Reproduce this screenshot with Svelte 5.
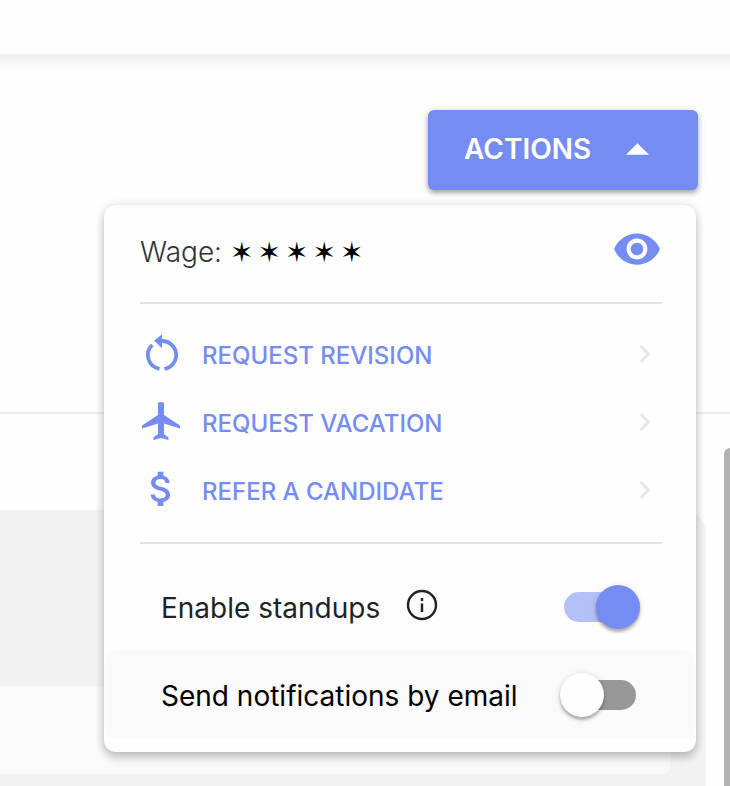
<script>
  let open = true;
  let wageVisible = false;
  let standups = true;
  let notifications = false;

  const wage = "2400";
  const hidden = "✶✶✶✶✶";
  const items = [
    { icon: "revision", label: "Request revision" },
    { icon: "vacation", label: "Request vacation" },
    { icon: "refer", label: "Refer a candidate" },
  ];
</script>

<div class="page">
  <header class="topbar"></header>

  <section class="toolbar">
    <div class="actions">
      <button
        class="actions-btn"
        aria-expanded={open}
        on:click={() => (open = !open)}
      >
        Actions
        <svg class="caret" class:closed={!open} viewBox="0 0 24 12">
          <path d="M0 12 12 0l12 12z" />
        </svg>
      </button>

      {#if open}
        <div class="menu">
          <div class="wage">
            <span class="wage-label">Wage:</span>
            <span class="wage-value">
              {#each wageVisible ? wage : hidden as char}
                <span>{char}</span>
              {/each}
            </span>
            <button
              class="eye"
              aria-label="Show wage"
              on:click={() => (wageVisible = !wageVisible)}
            >
              <svg viewBox="0 0 24 24">
                <path
                  d="M12 4.5C7 4.5 2.73 7.61 1 12c1.73 4.39 6 7.5 11 7.5s9.27-3.11 11-7.5c-1.73-4.39-6-7.5-11-7.5zM12 17c-2.76 0-5-2.24-5-5s2.24-5 5-5 5 2.24 5 5-2.24 5-5 5zm0-8c-1.66 0-3 1.34-3 3s1.34 3 3 3 3-1.34 3-3-1.34-3-3-3z"
                />
              </svg>
            </button>
          </div>

          <div class="list">
            {#each items as item}
              <button class="item">
                <svg class="item-icon" viewBox="0 0 48 48">
                  {#if item.icon === "revision"}
                    <g class="stroke">
                      <path d="M25 11a14 14 0 0 1 2.5 27.8" />
                      <path d="M22.5 38.8A14 14 0 0 1 15.3 14.8" />
                    </g>
                    <path d="M25 4.3v13.9l-7.8-7.4z" />
                  {:else if item.icon === "vacation"}
                    <path
                      d="M21 5.5q0-1.2 1.2-1.2h3.6q1.2 0 1.2 1.2V17l16 10.5v3l-16-5V36l4.5 3.5V42L24 40l-7.5 2v-2.5L21 36V25.5l-16 5v-3L21 17z"
                    />
                  {:else}
                    <path
                      transform="translate(1.7 0) scale(1.9)"
                      d="M11.8 10.9c-2.27-.59-3-1.2-3-2.15 0-1.09 1.01-1.85 2.7-1.85 1.78 0 2.44.85 2.5 2.1h2.21c-.07-1.72-1.12-3.3-3.21-3.81V3h-3v2.16c-1.94.42-3.5 1.68-3.5 3.61 0 2.31 1.91 3.46 4.7 4.13 2.5.6 3 1.48 3 2.41 0 .69-.49 1.79-2.7 1.79-2.06 0-2.87-.92-2.98-2.1h-2.2c.12 2.19 1.76 3.42 3.68 3.83V21h3v-2.15c1.95-.37 3.5-1.5 3.5-3.55 0-2.84-2.43-3.81-4.7-4.4z"
                    />
                  {/if}
                </svg>
                <span class="item-label">{item.label}</span>
                <svg class="chevron" viewBox="0 0 12 20">
                  <path d="m1.5 2 8 8-8 8" />
                </svg>
              </button>
            {/each}
          </div>

          <div class="setting">
            <label for="standups">Enable standups</label>
            <svg class="info" viewBox="0 0 32 32">
              <circle cx="16" cy="16" r="14" />
              <path d="M16 14.5V23M16 9v3" />
            </svg>
            <input id="standups" type="checkbox" bind:checked={standups} />
          </div>
          <div class="setting shaded">
            <label for="notifications">Send notifications by email</label>
            <input
              id="notifications"
              type="checkbox"
              bind:checked={notifications}
            />
          </div>
        </div>
      {/if}
    </div>
  </section>

  <main class="content">
    <div class="panel">
      <div class="panel-row"></div>
    </div>
    <div class="scrollbar"></div>
  </main>
</div>

<style>
  :global(body) {
    background: #fefefe;
    font-family: Inter, "DejaVu Sans", sans-serif;
  }

  .page {
    display: flex;
    flex-direction: column;
    min-height: 100vh;
    overflow: hidden;
  }

  .topbar {
    height: 54px;
    margin: 0 -16px;
    box-shadow: 0 4px 16px rgba(0, 0, 0, 0.09);
  }

  button {
    padding: 0;
    border: none;
    background: none;
    font-family: inherit;
    cursor: pointer;
  }

  svg {
    display: block;
    flex-shrink: 0;
  }

  .toolbar {
    display: flex;
    justify-content: flex-end;
    padding: 56px 32px 222px;
    border-bottom: 2px solid #ececec;
  }

  .actions {
    position: relative;
  }

  .actions-btn {
    display: flex;
    align-items: center;
    justify-content: space-between;
    width: 270px;
    height: 80px;
    padding: 0 49px 2px 36px;
    border-radius: 6px;
    background: #758cf2;
    box-shadow:
      0 3px 5px rgba(0, 0, 0, 0.3),
      0 1px 10px rgba(0, 0, 0, 0.1);
    color: #fff;
    font-size: 28px;
    font-weight: 600;
    text-transform: uppercase;
  }

  .caret {
    width: 23px;
    height: 12px;
    fill: #fff;
  }

  .caret.closed {
    transform: rotate(180deg);
  }

  .menu {
    position: absolute;
    top: 95px;
    right: 2px;
    z-index: 1;
    box-sizing: border-box;
    width: 592px;
    padding: 0 2px 14px;
    border-radius: 12px;
    background: #fefefe;
    box-shadow:
      0 6px 10px rgba(0, 0, 0, 0.2),
      0 0 10px rgba(0, 0, 0, 0.12);
  }

  .wage {
    display: flex;
    align-items: center;
    height: 88px;
    margin: 0 32px 0 34px;
    padding-bottom: 9px;
    border-bottom: 2px solid #e4e4e4;
    font-size: 28px;
  }

  .wage-label {
    padding-top: 6px;
    margin-right: 8px;
    color: #333;
    font-weight: 300;
  }

  .wage-value {
    display: flex;
    gap: 4px;
    padding-top: 6px;
    color: #000;
    font-family: "DejaVu Sans", sans-serif;
  }

  .eye {
    margin-left: auto;
  }

  .eye svg {
    width: 50px;
    height: 50px;
    fill: #758cf2;
  }

  .list {
    margin: 0 32px 0 34px;
    padding: 16px 0 18px;
    border-bottom: 2px solid #e4e4e4;
  }

  .item {
    display: flex;
    align-items: center;
    width: 100%;
    height: 68px;
    padding-right: 11px;
    color: #758cf2;
    font-size: 24px;
    font-weight: 500;
    text-transform: uppercase;
  }

  .item-icon {
    width: 48px;
    height: 48px;
    margin: 0 17px 0 -3px;
    fill: #758cf2;
  }

  .item-label {
    padding-top: 2px;
  }

  .stroke {
    fill: none;
    stroke: #758cf2;
    stroke-width: 3.8;
  }

  .chevron {
    width: 12px;
    height: 20px;
    margin-left: auto;
    fill: none;
    stroke: #e9e9eb;
    stroke-width: 3;
  }

  .setting {
    display: flex;
    align-items: center;
    box-sizing: border-box;
    height: 88px;
    padding: 2px 58px 0 55px;
    border-radius: 8px;
    color: #222;
    font-size: 28px;
  }

  .list + .setting {
    margin-top: 18px;
  }

  .shaded {
    background: #fafafa;
    color: #000;
  }

  label {
    padding-top: 2px;
  }

  .info {
    width: 32px;
    height: 32px;
    margin: 0 0 4px 26px;
    fill: none;
    stroke: #222;
    stroke-width: 2.4;
  }

  input {
    display: flex;
    flex-shrink: 0;
    align-items: center;
    width: 72px;
    height: 30px;
    margin: 0 0 0 auto;
    border-radius: 15px;
    background: #999;
    appearance: none;
    cursor: pointer;
  }

  input::before {
    content: "";
    flex-shrink: 0;
    width: 44px;
    height: 44px;
    margin-left: -4px;
    border-radius: 50%;
    background: #fefefe;
    box-shadow:
      0 3px 3px rgba(0, 0, 0, 0.25),
      0 1px 6px rgba(0, 0, 0, 0.15);
  }

  input:checked {
    background: #b4c1f8;
  }

  input:checked::before {
    margin-left: 32px;
    background: #758cf2;
  }

  .content {
    display: flex;
    flex: 1;
    gap: 18px;
    padding-top: 34px;
  }

  .panel {
    flex: 1;
    margin-top: 62px;
    padding: 176px 36px 12px 0;
    border-top-right-radius: 24px;
    background: #f3f3f3;
  }

  .panel-row {
    height: 88px;
    border-bottom-right-radius: 8px;
    background: #fafafa;
  }

  .scrollbar {
    width: 6px;
    border-top-left-radius: 6px;
    background: #b2b2b2;
  }
</style>
